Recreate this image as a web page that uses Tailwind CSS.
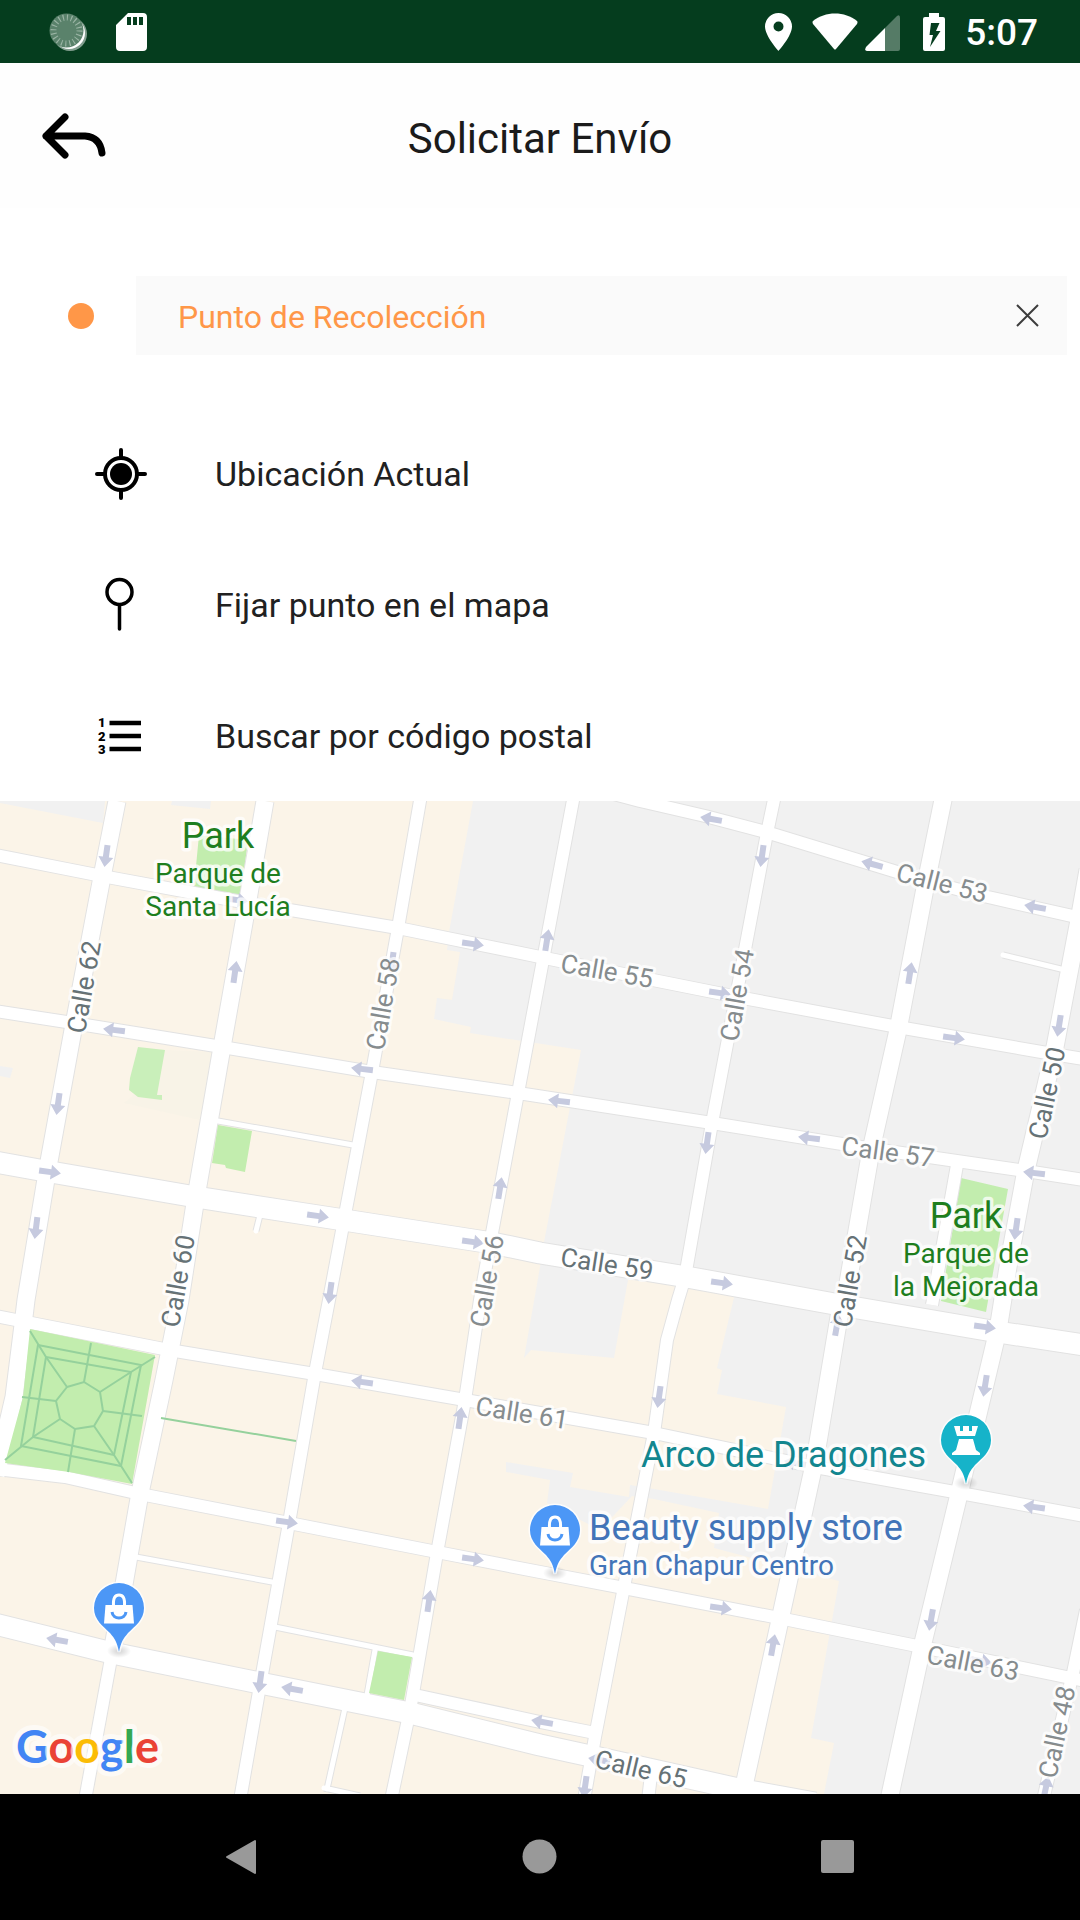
<!DOCTYPE html>
<html lang="es">
<head>
  <meta charset="UTF-8">
  <meta name="viewport" content="width=device-width, initial-scale=1.0">
  <title>Solicitar Envío</title>
  <script src="https://cdn.jsdelivr.net/npm/@tailwindcss/browser@4"></script>
</head>
<body class="bg-white font-[Roboto,sans-serif] text-[#212121]">
  <div class="min-h-screen flex flex-col">

    <!-- Status bar -->
    <div class="h-[63px] bg-[#053d1e] text-white flex items-center justify-between pl-12 pr-[42px]">
      <div class="flex items-center gap-[28px]">
        <svg class="w-10 h-10" viewBox="0 0 40 40">
          <circle cx="22" cy="22" r="17" fill="#fff" opacity=".5"/>
          <circle cx="21" cy="21" r="16" fill="#fff"/>
          <circle cx="18.500" cy="18.500" r="17" fill="#5a826b"/>
          <circle cx="18.500" cy="18.500" r="13" fill="none" stroke="#9bb5a5" stroke-width="6" stroke-dasharray="1.100 2.984"/>
        </svg>
        <svg class="w-[31px] h-[38px]" viewBox="0 0 31 38">
          <path fill="#fff" fill-rule="evenodd" d="M12 0H27a4 4 0 0 1 4 4V34a4 4 0 0 1-4 4H4a4 4 0 0 1-4-4V12ZM11 4v8h4V4ZM17 4v8h4V4ZM23 4v8h4V4Z"/>
        </svg>
      </div>
      <div class="flex items-center">
        <svg class="w-[27px] h-[38px] mr-5" viewBox="0 0 27 38">
          <path fill="#fff" fill-rule="evenodd" d="M13.500 0A13.500 13.500 0 0 1 27 13.500C27 23 13.500 38 13.500 38S0 23 0 13.500A13.500 13.500 0 0 1 13.500 0ZM13.500 8.500a5 5 0 1 0 0 10a5 5 0 0 0 0-10Z"/>
        </svg>
        <svg class="w-[46px] h-[38px] mr-[7px]" viewBox="0 0 46 38">
          <path fill="#fff" d="M1 8C13-2 33-2 45 8Q46 9 45 11L24 36Q23 37 22 36L1 11Q0 9 1 8Z"/>
        </svg>
        <svg class="w-[35px] h-[38px] mr-[23px]" viewBox="0 0 35 38">
          <path fill="#fff" opacity=".32" d="M20 15L32 3Q35 1 35 5V36Q35 38 33 38H20Z"/>
          <path fill="#fff" d="M20 15V38H2Q-1 38 1 34Z"/>
        </svg>
        <svg class="w-[22px] h-[38px] mr-5" viewBox="0 0 22 38">
          <path fill="#fff" fill-rule="evenodd" d="M6 0H16V4H20Q22 4 22 6V36Q22 38 20 38H2Q0 38 0 36V6Q0 4 2 4H6ZM8 10L6.500 22H10L7 34L17.500 18H13L16.500 10Z"/>
        </svg>
        <span class="text-[37px] leading-[44px] pt-[2px] font-medium">5:07</span>
      </div>
    </div>

    <!-- Header -->
    <header class="h-[145px] bg-[#fefefe] grid grid-cols-[120px_1fr_120px] items-center">
      <button type="button" aria-label="Regresar" class="pl-[40px]">
        <svg class="w-[68px] h-[50px]" viewBox="0 0 68 50" fill="none" stroke="#000" stroke-width="7" stroke-linecap="round" stroke-linejoin="round">
          <path d="M25 6L6 25L25 44M6 25H45Q60 26 62 42"/>
        </svg>
      </button>
      <h1 class="text-[42px] leading-[50px] text-center pt-[6px] text-[#1b1b1b]">Solicitar Envío</h1>
    </header>

    <!-- Pickup point -->
    <div class="pt-[68px] pb-[53px] pl-[68px] pr-[13px] flex items-center">
      <span class="w-[26px] h-[26px] rounded-full bg-[#ff9748]"></span>
      <div class="ml-[42px] flex-1 flex items-center h-[79px] bg-[#fafafa]">
        <input type="text" aria-label="Punto de Recolección" value="Punto de Recolección" class="flex-1 h-full pl-[42px] pt-[2px] text-[32px] text-[#ff9748] bg-transparent outline-none">
        <button type="button" aria-label="Borrar" class="w-20 h-full flex items-center justify-center">
          <svg class="w-6 h-6" viewBox="0 0 24 24" stroke="#3c3c3c" stroke-width="2"><path d="M2 1L23 22M23 1L2 22"/></svg>
        </button>
      </div>
    </div>

    <!-- Options -->
    <nav class="flex flex-col text-[34px] leading-[40px]">
      <button type="button" class="h-[131px] pl-[91px] flex items-center gap-16 text-left">
        <svg class="w-[60px] h-[60px]" viewBox="0 0 60 60" fill="none" stroke="#000" stroke-width="4" stroke-linecap="round">
          <circle cx="30" cy="30" r="16"/>
          <circle cx="30" cy="30" r="11" fill="#000" stroke="none"/>
          <path d="M30 6v8M30 46v8M6 30h8M46 30h8"/>
        </svg>
        <span>Ubicación Actual</span>
      </button>
      <button type="button" class="h-[131px] pl-[91px] flex items-center gap-16 text-left">
        <svg class="w-[60px] h-[60px]" viewBox="0 0 60 60" fill="none" stroke="#000" stroke-width="3.500" stroke-linecap="round">
          <circle cx="28.500" cy="17" r="12.500"/>
          <path d="M28.500 30v24"/>
        </svg>
        <span>Fijar punto en el mapa</span>
      </button>
      <button type="button" class="h-[131px] pl-[91px] flex items-center gap-16 text-left">
        <svg class="w-[60px] h-[60px]" viewBox="0 0 60 60">
          <path d="M18.500 17H50M18.500 30H50M18.500 43H50" stroke="#000" stroke-width="4.500"/>
          <g font-size="13" font-weight="900" fill="#000"><text x="7" y="21">1</text><text x="7" y="35">2</text><text x="7" y="48">3</text></g>
        </svg>
        <span>Buscar por código postal</span>
      </button>
    </nav>

    <!-- Map -->
    <main class="flex-1 min-h-[400px] relative overflow-hidden bg-[#f1f1f1]">
      <svg class="absolute inset-0 w-full h-full" viewBox="0 801 1080 993" preserveAspectRatio="xMidYMid slice" role="img" aria-label="Mapa">
        <defs>
          <path id="arrow" d="M-11-3H1V-7.500L11 0L1 7.500V3H-11Z"/>
          <path id="pin" d="M0 44C-2 34-4 31-9 25C-16 18-25 12-25 0A25 25 0 1 1 25 0C25 12 16 18 9 25C4 31 2 34 0 44Z"/>
          <radialGradient id="shade"><stop offset="0" stop-color="#000" stop-opacity=".18"/><stop offset="1" stop-color="#000" stop-opacity="0"/></radialGradient>
          <g id="bag">
            <ellipse cy="43" rx="12" ry="7" fill="url(#shade)"/>
            <use href="#pin" fill="#4c97f6" stroke="#fff" stroke-opacity=".8" stroke-width="3" paint-order="stroke"/>
            <path d="M-13.500-3H13.500L15 15.500H-15Z" fill="#fff"/>
            <path d="M-5.500-2C-6-10-4-13 0-13S6-10 5.500-2" fill="none" stroke="#fff" stroke-width="3"/>
            <path d="M-7 4C-6 12 6 12 7 4" fill="none" stroke="#4c97f6" stroke-width="3"/>
          </g>
          <g id="wide">
            <path d="M117 801L102 877L73 1030L48 1167L26 1300L23 1325L14 1397L-4 1475"/>
            <path d="M265 801L245 917L222 1047L196 1197L180 1300L164 1380L140 1493L123 1590L112 1653"/>
            <path d="M944 795L926 883L898 1030L871 1150L848 1283L839 1317L815 1460L780 1620L744 1786"/>
            <path d="M1088 870L1080 915L1055 1047L1026 1170L1008 1267L998 1330L960 1490L922 1647L889 1800"/>
          </g>
          <g id="narrow">
            <path d="M112 1653L85 1800"/>
            <path d="M421 795L398 928L372 1072L344 1220L329 1300L315 1373L289 1523L261 1680L240 1800"/>
            <path d="M574 795L543 960L518 1093L492 1233L480 1300L465 1400L437 1553L411 1705L391 1800"/>
            <path d="M775 795L767 833L736 997L712 1123L685 1277L678 1300L667 1340L654 1433L624 1587L595 1737L584 1800"/>
            <path d="M1086 1610L1073 1673L1043 1800"/>
            <path d="M610 793L640 801L705 816L766 832L884 868L933 883L988 897L1090 920"/>
            <path d="M-5 855L102 876L248 903L398 928L540 957L643 978L743 998L898 1027L1053 1054L1090 1060"/>
            <path d="M-5 1011L73 1023L222 1047L372 1072L518 1093L712 1123L867 1148L1026 1171L1090 1181"/>
            <path d="M-5 1316L21 1321L169 1350L315 1374L465 1400L540 1413L654 1433L815 1467L960 1493L1090 1517"/>
            <path d="M-5 1469L65 1477L140 1494L289 1523L437 1552L540 1572L624 1588L779 1618L922 1647L1090 1682"/>
            <path d="M415 1695L540 1722L595 1733M957 1165L936 1283L932 1305M651 1775L648 1800"/>
          </g>
          <g id="major">
            <path d="M-5 1162L45 1171L196 1197L344 1220L492 1243L540 1253L681 1276L840 1305L998 1332L1090 1346"/>
            <path d="M-5 1624L112 1653L260 1683L410 1713L540 1745L595 1757L743 1790L815 1803"/>
          </g>
          <path id="lane" d="M136 1557L272 1582M275 1627L413 1655M375 1650L367 1695M345 1708L327 1789M324 1788L360 1796M218 1121L353 1145M260 1215L256 1231M1003 955L1065 970"/>
        </defs>

        <!-- Land -->
        <rect y="801" width="1080" height="993" fill="#f1f1f1"/>
        <path fill="#fbf4e8" d="M0 801H473L449 932L447 950L460 952L452 1000L437 998L434 1019L471 1027L470 1033L581 1050L544 1242L540 1267L524 1358L531 1350L614 1358L628 1280L737 1285L717 1368L722 1370L717 1394L786 1407L768 1509L654 1489L630 1485L629 1497L570 1487L573 1473L506 1462V1472L550 1480L547 1503L600 1530L632 1496L654 1499L719 1513L714 1548L839 1581L811 1738L834 1743L824 1794H0Z"/>
        <path fill="#f1f1f1" d="M0 801H105L103 823L0 803ZM172 801H211L210 809L171 805ZM0 1066L13 1068L10 1078L0 1076Z"/>
        <path fill="#f8f3e7" d="M165 1050L212 1052L200 1120L124 1103L132 1097Z"/>
        <path fill="#c9efba" d="M138 1047L165 1050L157 1095H162V1100L138 1097L129 1090L130 1078Z"/>
        <path fill="#c2edae" d="M199 835L248 840L241 895L194 887ZM961 1178L1008 1189L986 1312L941 1301Z"/>

        <!-- Streets -->
        <g fill="none" stroke="#e2e2e2" stroke-linejoin="round">
          <use href="#lane" stroke-width="7"/>
          <use href="#narrow" stroke-width="14"/>
          <use href="#wide" stroke-width="19"/>
          <use href="#major" stroke-width="23"/>
        </g>
        <g fill="none" stroke="#fff" stroke-linejoin="round">
          <use href="#lane" stroke-width="5" stroke-linecap="round"/>
          <use href="#narrow" stroke-width="12"/>
          <use href="#wide" stroke-width="17"/>
          <use href="#major" stroke-width="21"/>
        </g>
        <path d="M166 1372L176 1356L160 1350Z" fill="#fff"/>

        <!-- Squares -->
        <path fill="#c2edae" d="M218 1125L252 1131L245 1172L226 1168L225 1165L212 1163ZM378 1651L412 1657L404 1700L369 1693ZM30 1329L155 1355L132 1484L69 1472L5 1463L23 1397Z"/>
        <g fill="none" stroke="#95d19c" stroke-width="2">
          <path d="M38 1345L141 1365L121 1466L21 1446ZM46 1357L131 1372L114 1455L33 1437ZM67 1387L84 1382L100 1392L103 1411L94 1426L75 1429L60 1419L56 1401Z"/>
          <path d="M30 1331L46 1357L67 1387M155 1357L131 1372L100 1392M132 1483L114 1455L94 1426M5 1460L33 1437L60 1419M91 1343L84 1382M142 1416L103 1411M68 1472L75 1429M22 1397L56 1401M161 1418L296 1441"/>
        </g>

        <!-- Traffic direction -->
        <g id="arrows" fill="#c6cadf"></g>

        <!-- Street names -->
        <g id="streets" font-size="26" text-anchor="middle" stroke="#fff" stroke-opacity=".75" stroke-width="6" stroke-linejoin="round" paint-order="stroke"></g>

        <!-- Places -->
        <g stroke="#fff" stroke-opacity=".75" stroke-width="7" stroke-linejoin="round" paint-order="stroke" font-size="28">
          <g fill="#1e7e1e" text-anchor="middle">
            <text x="218" y="848" font-size="36">Park</text>
            <text x="218" y="883">Parque de</text>
            <text x="218" y="916">Santa Lucía</text>
            <text x="966" y="1228" font-size="36">Park</text>
            <text x="966" y="1263">Parque de</text>
            <text x="966" y="1296">la Mejorada</text>
          </g>
          <text x="926" y="1467" font-size="36" text-anchor="end" fill="#12868f">Arco de Dragones</text>
          <g fill="#4274b8">
            <text x="589" y="1540" font-size="36">Beauty supply store</text>
            <text x="589" y="1575">Gran Chapur Centro</text>
          </g>
        </g>
        <use href="#bag" x="119" y="1608"/>
        <use href="#bag" x="555" y="1530"/>
        <g transform="translate(966 1440)">
          <ellipse cy="43" rx="12" ry="7" fill="url(#shade)"/>
          <use href="#pin" fill="#16b3c9" stroke="#fff" stroke-opacity=".8" stroke-width="3" paint-order="stroke"/>
          <path fill="#fff" d="M-12-14H-6V-9H-3V-14H3V-9H6V-14H12L9-4H-9ZM-7-1H7L10 10L14 13V15H-14V13L-10 10Z"/>
        </g>

        <!-- Logo -->
        <text x="16" y="1763" font-family="Lato" font-size="45" font-weight="700" stroke="#fff" stroke-opacity=".6" stroke-width="10" stroke-linejoin="round" paint-order="stroke"><tspan fill="#4285f4">G</tspan><tspan fill="#ea4335">o</tspan><tspan fill="#fbbc05">o</tspan><tspan fill="#4285f4">g</tspan><tspan fill="#34a853">l</tspan><tspan fill="#ea4335">e</tspan></text>
      </svg>
    </main>

    <!-- Navigation bar -->
    <footer class="h-[126px] bg-black flex items-center justify-center gap-[258px]">
      <button type="button" aria-label="Atrás"><svg class="w-10 h-10" viewBox="0 0 40 40"><path d="M5 20L33 4V36Z" fill="#999" stroke="#999" stroke-width="2" stroke-linejoin="round"/></svg></button>
      <button type="button" aria-label="Inicio"><svg class="w-10 h-10" viewBox="0 0 40 40"><circle cx="19.500" cy="19.500" r="17" fill="#999"/></svg></button>
      <button type="button" aria-label="Recientes"><svg class="w-10 h-10" viewBox="0 0 40 40"><rect x="3" y="3" width="33" height="33" rx="2" fill="#999"/></svg></button>
    </footer>
  </div>

  <script>
    const NS = "http://www.w3.org/2000/svg";

    // x, y, heading in degrees
    const arrows = [
      [106, 856, 98], [58, 1104, 98], [36, 1228, 97], [235, 972, -82], [237, 900, 8], [473, 944, 8],
      [114, 1030, 187], [362, 1069, 187], [50, 1172, 8], [318, 1216, 8], [473, 1242, 8], [500, 1188, -81],
      [330, 1293, 98], [392, 963, 98], [711, 819, 190], [762, 856, 98], [872, 864, 195], [1035, 907, 190],
      [547, 940, -81], [720, 993, 8], [910, 973, -81], [954, 1038, 8], [1059, 1026, 99], [559, 1101, 187],
      [707, 1143, 98], [809, 1138, 187], [1034, 1173, 187], [1016, 1229, 98], [722, 1283, 8], [362, 1382, 188],
      [460, 1418, -82], [287, 1522, 8], [473, 1559, 8], [429, 1601, -82], [57, 1640, 190], [292, 1689, 190],
      [260, 1682, 98], [542, 1722, 190], [659, 1397, 98], [985, 1327, 8], [985, 1386, 99], [1034, 1507, 188],
      [931, 1620, 100], [721, 1608, 8], [773, 1645, -80], [1046, 1787, -78], [585, 1787, 98], [599, 1760, 190],
      [837, 1325, -80], [981, 1661, 10], [795, 1463, 190]
    ];
    const arrowLayer = document.getElementById("arrows");
    arrows.forEach(([x, y, deg]) => {
      const use = document.createElementNS(NS, "use");
      use.setAttribute("href", "#arrow");
      use.setAttribute("transform", `translate(${x} ${y}) rotate(${deg})`);
      arrowLayer.appendChild(use);
    });

    // name, x, y, angle, main street
    const streets = [
      ["Calle 62", 84, 987, -80, true], ["Calle 58", 383, 1004, -80, false], ["Calle 60", 178, 1281, -80, true],
      ["Calle 56", 487, 1281, -80, false], ["Calle 54", 737, 995, -80, false], ["Calle 50", 1047, 1093, -78, true],
      ["Calle 52", 850, 1281, -80, true], ["Calle 48", 1057, 1732, -78, false], ["Calle 53", 942, 883, 14, false],
      ["Calle 55", 607, 971, 10, false], ["Calle 57", 888, 1152, 8, false], ["Calle 59", 607, 1264, 9, true],
      ["Calle 61", 522, 1413, 9, false], ["Calle 63", 973, 1663, 11, false], ["Calle 65", 641, 1769, 13, true]
    ];
    const streetLayer = document.getElementById("streets");
    streets.forEach(([name, x, y, deg, main]) => {
      const text = document.createElementNS(NS, "text");
      text.textContent = name;
      text.setAttribute("y", 9);
      text.setAttribute("fill", main ? "#667276" : "#868c8e");
      text.setAttribute("transform", `translate(${x} ${y}) rotate(${deg})`);
      streetLayer.appendChild(text);
    });
  </script>
</body>
</html>
